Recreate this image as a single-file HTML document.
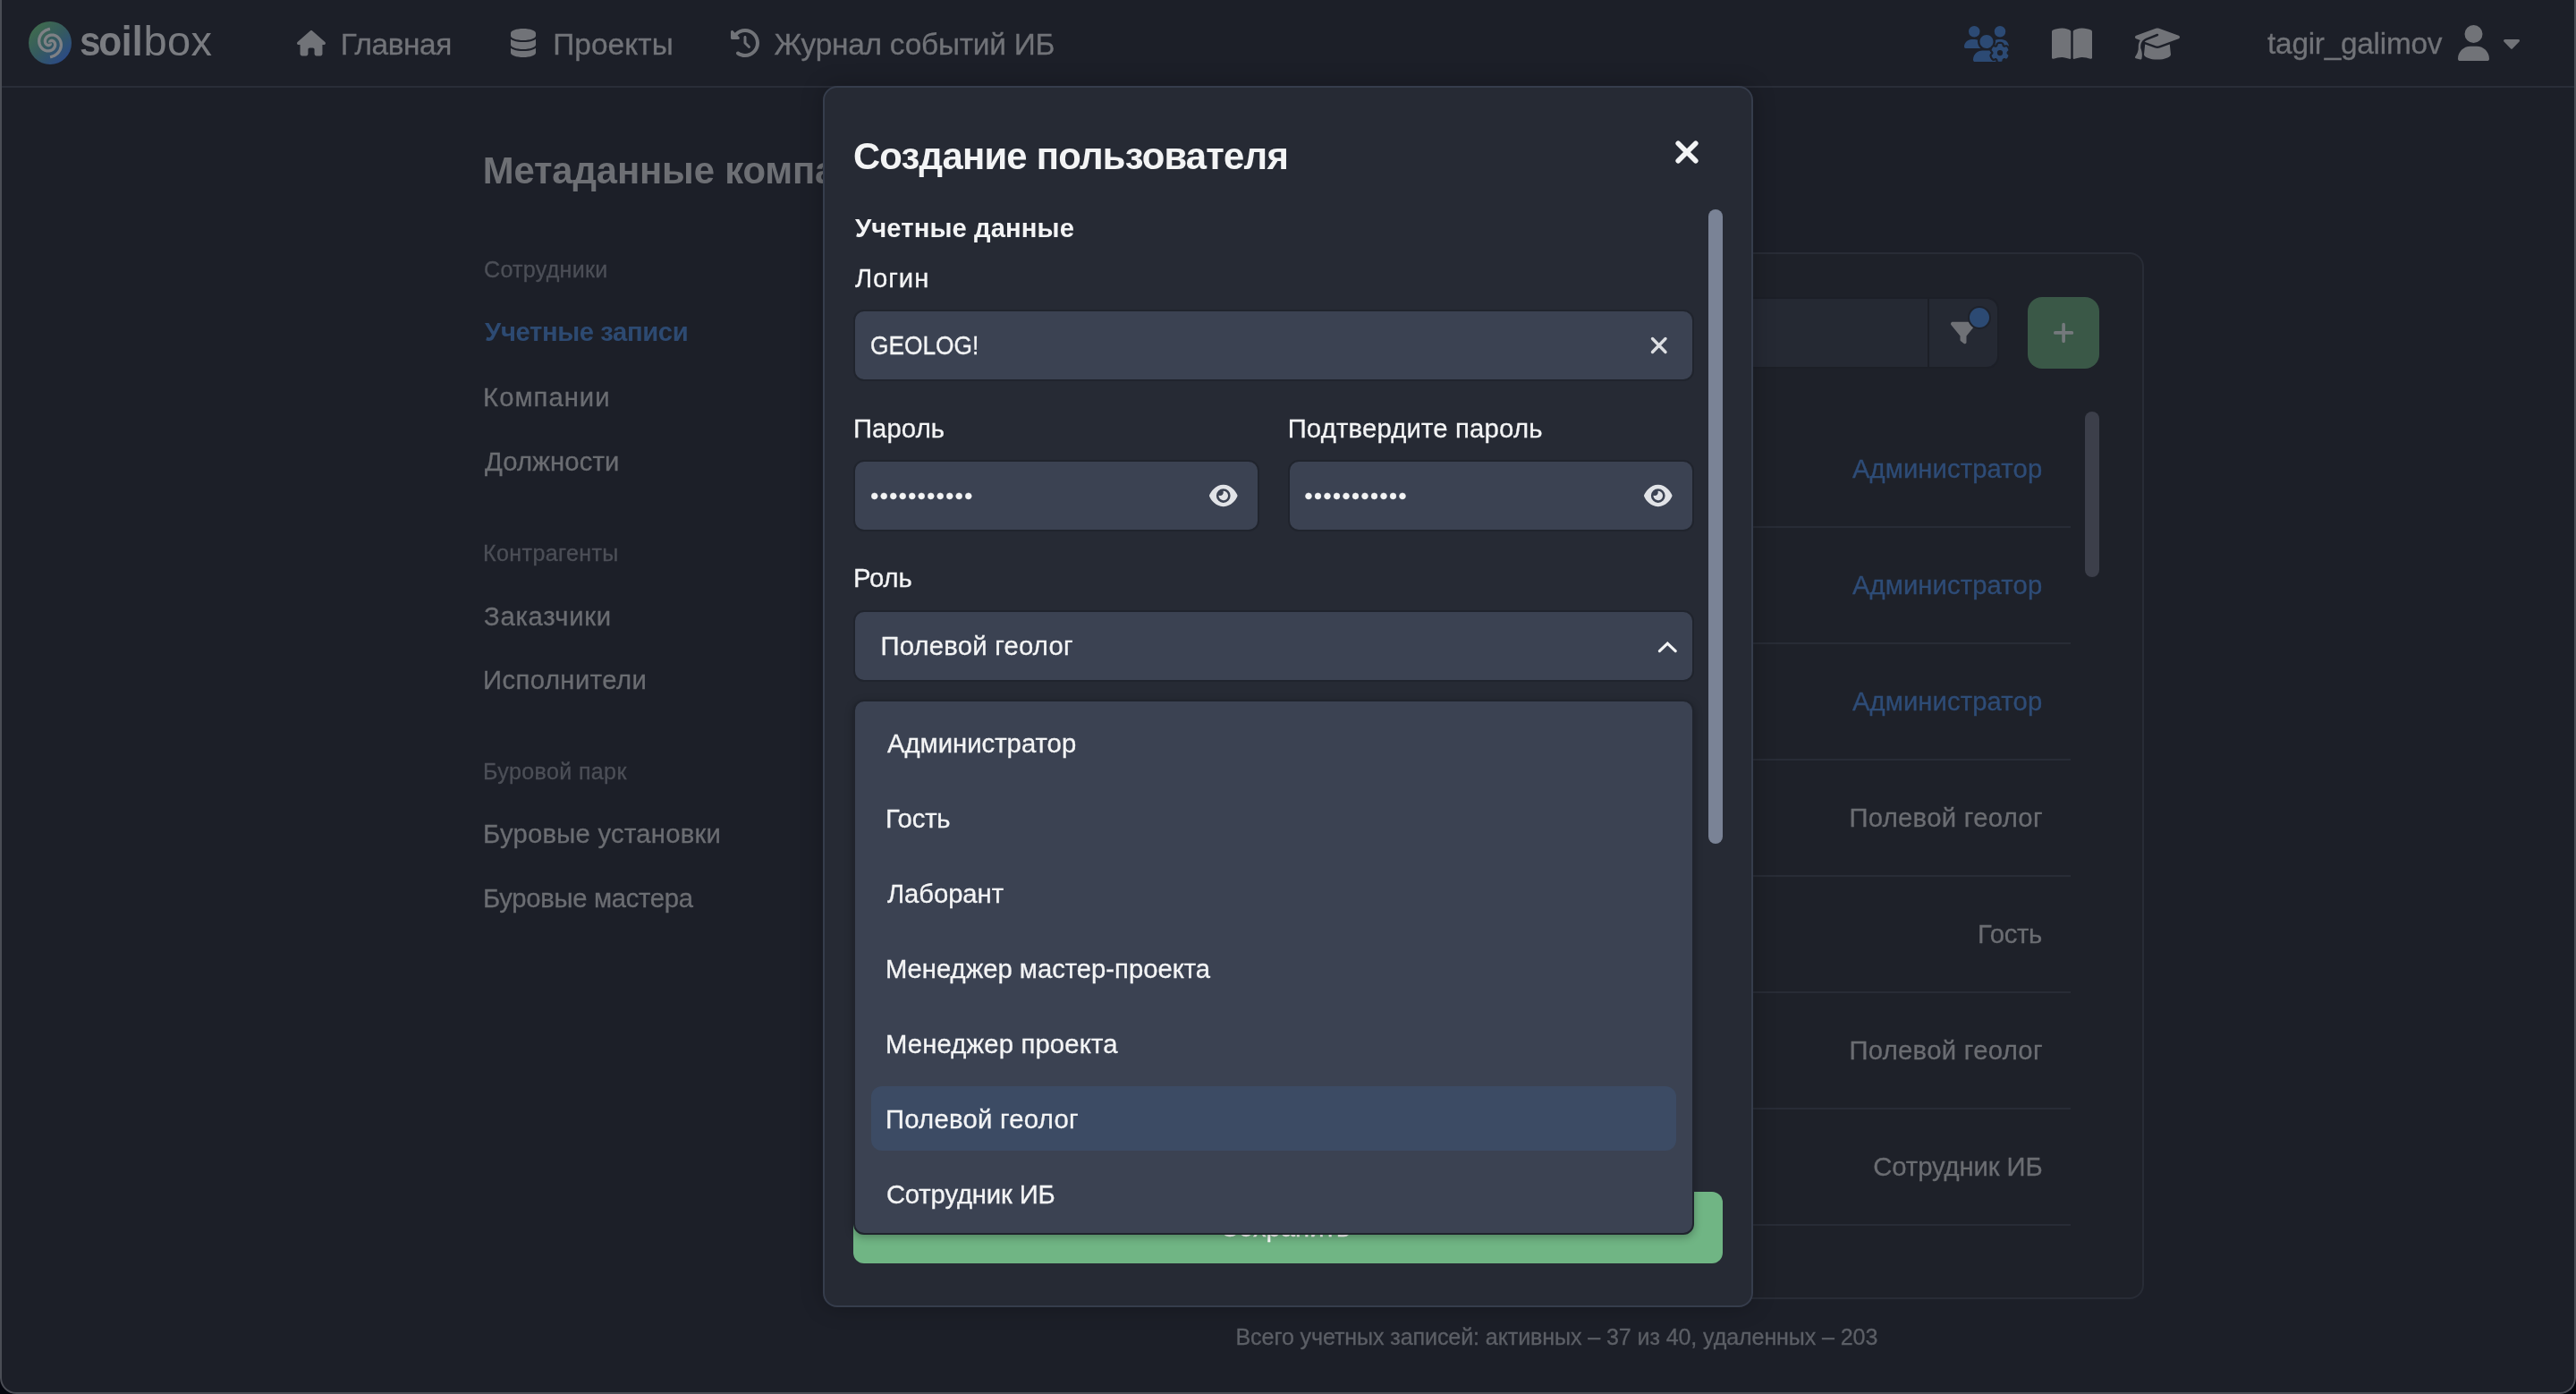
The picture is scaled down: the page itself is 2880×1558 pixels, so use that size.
<!DOCTYPE html>
<html lang="ru"><head><meta charset="utf-8"><title>soilbox</title><style>
*{box-sizing:border-box}
html,body{margin:0;padding:0}
html{overflow:hidden;background:#05070f}
body{width:2880px;height:1558px;overflow:hidden;background:#05070f;font-family:"Liberation Sans", sans-serif;position:relative}
.win{transform:translateZ(0);will-change:transform;position:absolute;left:0;top:0;width:2880px;height:1558px;background:#1c1f28;border-radius:0 0 18px 18px;overflow:hidden}
.frame{position:absolute;left:0;top:-4px;width:2880px;height:1562px;border-left:2px solid #4a4d55;border-right:2px solid #4a4d55;border-bottom:2px solid #4a4d55;border-radius:0 0 18px 18px;pointer-events:none}
.t{position:absolute;white-space:nowrap;line-height:1}
.i{position:absolute;display:block;overflow:visible}
.b{position:absolute}
</style></head><body>
<div class="win">
<nav aria-label="Главное меню">
<div class="b" style="left:0;top:96px;width:2880px;height:2px;background:#292d38"></div>
<svg class="i" style="left:32px;top:24px" width="48" height="48" viewBox="-24 -24 48 48" ><defs><linearGradient id="lg" x1="0.15" y1="0.1" x2="0.85" y2="0.9"><stop offset="0" stop-color="#3f6b4e"/><stop offset="0.5" stop-color="#355a60"/><stop offset="1" stop-color="#2b4a86"/></linearGradient></defs><circle cx="0" cy="0" r="24" fill="url(#lg)"/><path d="M0.00,-15.60 L-1.61,-15.29 L-3.15,-14.81 L-4.61,-14.18 L-5.97,-13.41 L-7.22,-12.51 L-8.36,-11.50 L-9.36,-10.40 L-10.23,-9.21 L-10.95,-7.95 L-11.52,-6.65 L-11.94,-5.32 L-12.21,-3.97 L-12.33,-2.62 L-12.31,-1.29 L-12.15,-0.00 L-11.85,1.25 L-11.43,2.43 L-10.90,3.54 L-10.26,4.57 L-9.53,5.50 L-8.71,6.33 L-7.83,7.05 L-6.90,7.66 L-5.92,8.15 L-4.93,8.53 L-3.91,8.79 L-2.90,8.93 L-1.90,8.96 L-0.93,8.88 L-0.00,8.70 L0.89,8.42 L1.71,8.06 L2.48,7.62 L3.16,7.11 L3.78,6.54 L4.30,5.92 L4.74,5.27 L5.10,4.59 L5.36,3.90 L5.54,3.20 L5.64,2.51 L5.65,1.84 L5.59,1.19 L5.45,0.57 L5.25,0.00 L4.99,-0.52 L4.69,-1.00 L4.34,-1.41 L3.96,-1.76 L3.55,-2.05 L3.13,-2.27 L2.71,-2.44 L2.28,-2.53 L1.87,-2.57 L1.47,-2.55 L1.11,-2.48 L0.77,-2.37 L0.47,-2.21 L0.21,-2.02 L0.00,-1.80 L-0.16,-1.56 L-0.28,-1.31 L-0.34,-1.06 L-0.36,-0.80 L-0.32,-0.56" fill="none" stroke="#7e8185" stroke-width="3.3"/><path d="M0.00,15.60 L1.61,15.29 L3.15,14.81 L4.61,14.18 L5.97,13.41 L7.23,12.51 L8.36,11.50 L9.36,10.40 L10.23,9.21 L10.95,7.95 L11.52,6.65 L11.94,5.32 L12.21,3.97 L12.33,2.62 L12.31,1.29 L12.15,0.00 L11.85,-1.25 L11.43,-2.43 L10.90,-3.54 L10.26,-4.57 L9.53,-5.50 L8.71,-6.33 L7.83,-7.05 L6.90,-7.66 L5.92,-8.15 L4.92,-8.53 L3.91,-8.79 L2.90,-8.93 L1.90,-8.96 L0.93,-8.88 L0.00,-8.70 L-0.89,-8.42 L-1.71,-8.06 L-2.48,-7.62 L-3.16,-7.11 L-3.77,-6.54 L-4.30,-5.92 L-4.74,-5.27 L-5.10,-4.59 L-5.36,-3.90 L-5.54,-3.20 L-5.64,-2.51 L-5.65,-1.84 L-5.59,-1.19 L-5.45,-0.57 L-5.25,-0.00 L-4.99,0.52 L-4.69,1.00 L-4.34,1.41 L-3.96,1.76 L-3.55,2.05 L-3.13,2.27 L-2.71,2.44 L-2.28,2.53 L-1.87,2.57 L-1.48,2.55 L-1.11,2.48 L-0.77,2.37 L-0.47,2.21 L-0.21,2.02 L-0.00,1.80 L0.16,1.56 L0.28,1.31 L0.34,1.06 L0.36,0.80 L0.32,0.56" fill="none" stroke="#7e8185" stroke-width="3.3"/></svg>
<div class="t" style="left:88.8px;top:22.01px;font-size:47px;color:#7a7c81;font-weight:700;transform:scaleX(0.9);transform-origin:0 0"><span style="letter-spacing:-2.6px">s</span><span style="letter-spacing:-0.2px">o</span><span style="letter-spacing:0.2px">i</span>l</div>
<div class="t" style="left:160.4px;top:22.01px;font-size:47px;color:#7a7c81;letter-spacing:0.4px">box</div>
<svg class="i" style="left:332px;top:34.2px" width="32" height="28.5" viewBox="0 0 576 512" ><path fill="#717378" d="M575.8 255.5c0 18-15 32.1-32 32.1h-32l.7 160.2c0 2.700-.2 5.400-.5 8.100V472c0 22.100-17.900 40-40 40H456c-1.100 0-2.200 0-3.300-.1c-1.400 .1-2.800 .1-4.200 .1H416 392c-22.100 0-40-17.900-40-40V448 384c0-17.700-14.300-32-32-32H256c-17.700 0-32 14.300-32 32v64 24c0 22.100-17.900 40-40 40H160 128.100c-1.500 0-3-.1-4.500-.2c-1.200 .1-2.400 .2-3.600 .2H104c-22.100 0-40-17.900-40-40V360c0-.9 0-1.900 .1-2.800V287.600H32c-18 0-32-14-32-32.100c0-9 3-17 10-24L266.400 8c7-7 15-8 22-8s15 2 21 7L564.800 231.500c8 7 12 15 11 24z"/></svg>
<div class="t" style="left:380.70px;top:33.19px;font-size:33.44px;color:#717378;-webkit-text-stroke:0.3px;letter-spacing:-0.431px;">Главная</div>
<svg class="i" style="left:571px;top:32px" width="28" height="32" viewBox="0 0 448 512" ><path fill="#717378" d="M448 80v48c0 44.200-100.300 80-224 80S0 172.200 0 128V80C0 35.800 100.300 0 224 0S448 35.800 448 80zM393.200 214.700c20.800-7.400 39.900-16.900 54.800-28.600V288c0 44.200-100.300 80-224 80S0 332.200 0 288V186.100c14.900 11.800 34 21.200 54.800 28.600C99.700 230.700 159.500 240 224 240s124.300-9.300 169.200-25.300zM0 346.100c14.900 11.800 34 21.200 54.800 28.600C99.700 390.700 159.500 400 224 400s124.300-9.300 169.200-25.300c20.800-7.400 39.900-16.900 54.800-28.600V432c0 44.200-100.300 80-224 80S0 476.200 0 432V346.100z"/></svg>
<div class="t" style="left:618.20px;top:33.19px;font-size:33.44px;color:#717378;-webkit-text-stroke:0.3px;letter-spacing:0.066px;">Проекты</div>
<svg class="i" style="left:817px;top:32px" width="32" height="32" viewBox="0 0 512 512" ><path fill="#717378" d="M75 75L41 41C25.900 25.900 0 36.600 0 57.900V168c0 13.300 10.700 24 24 24H134.100c21.400 0 32.100-25.900 17-41l-30.800-30.800C155 85.500 203 64 256 64c106 0 192 86 192 192s-86 192-192 192c-40.800 0-78.600-12.700-109.700-34.400c-14.500-10.100-34.400-6.600-44.600 7.900s-6.600 34.400 7.900 44.600C151.200 495 201.700 512 256 512c141.400 0 256-114.600 256-256S397.400 0 256 0C185.300 0 121.300 28.700 75 75zm181 53c-13.300 0-24 10.700-24 24V256c0 6.400 2.500 12.500 7 17l72 72c9.400 9.400 24.600 9.400 33.900 0s9.400-24.600 0-33.900l-65-65V152c0-13.300-10.700-24-24-24z"/></svg>
<div class="t" style="left:865.40px;top:33.19px;font-size:33.44px;color:#717378;-webkit-text-stroke:0.3px;letter-spacing:-0.251px;">Журнал событий ИБ</div>
<svg class="i" style="left:2196px;top:28.8px" width="50" height="40" viewBox="0 0 640 512" ><path fill="#2c4a74" d="M144 160A80 80 0 1 0 144 0a80 80 0 1 0 0 160zm368 0A80 80 0 1 0 512 0a80 80 0 1 0 0 160zM0 298.700C0 310.400 9.600 320 21.300 320H234.700c.2 0 .4 0 .7 0c-26.600-23.500-43.300-57.800-43.300-96c0-7.600 .7-15 1.900-22.300c-13.600-6.300-28.700-9.700-44.600-9.700H106.700C47.800 192 0 239.800 0 298.700zM320 320c24 0 45.900-8.800 62.700-23.300c2.500-3.700 5.200-7.300 8-10.700c2.700-3.300 5.700-6.100 9-8.300C410 262.300 416 243.900 416 224c0-53-43-96-96-96s-96 43-96 96s43 96 96 96zm65.400 60.200c-10.300-5.900-18.100-16.200-20.800-28.200H261.300C187.700 352 128 411.700 128 485.300c0 14.700 11.900 26.700 26.700 26.700H455.200c-2.100-5.200-3.200-10.900-3.200-16.400v-3c-1.300-.7-2.700-1.500-4-2.300l-2.600 1.500c-16.800 9.700-40.500 8-54.700-9.700c-4.500-5.600-8.600-11.500-12.400-17.600l-.1-.2-.1-.2-2.400-4.100-.1-.2-.1-.2c-3.400-6.200-6.400-12.600-9-19.300c-8.200-21.200 2.200-42.600 19-52.300l2.700-1.500c0-.8 0-1.500 0-2.300s0-1.500 0-2.300l-2.700-1.500zM533.300 192H490.700c-15.900 0-31 3.500-44.600 9.700c1.300 7.200 1.900 14.700 1.900 22.300c0 17.400-3.500 33.900-9.700 49c2.500 .9 4.900 2 7.100 3.300l2.600 1.500c1.300-.8 2.600-1.600 4-2.300v-3c0-19.400 13.300-39.100 35.800-42.600c7.900-1.200 16-1.900 24.200-1.900s16.300 .6 24.200 1.900c22.500 3.500 35.800 23.200 35.800 42.600v3c1.300 .7 2.700 1.500 4 2.300l2.600-1.500c16.800-9.700 40.500-8 54.700 9.700c2.300 2.800 4.500 5.800 6.600 8.700c-2.100-57.100-49-102.700-106.600-102.700zm91.300 163.900c6.300-3.600 9.500-11.100 6.800-18c-2.100-5.500-4.600-10.800-7.400-15.900l-2.300-4c-3.100-5.100-6.500-9.900-10.200-14.500c-4.600-5.700-12.700-6.700-19-3l-2.900 1.700c-9.200 5.300-20.400 4-29.600-1.300s-16.100-14.500-16.100-25.100v-3.400c0-7.300-4.900-13.800-12.100-14.900c-6.500-1-13.100-1.500-19.900-1.500s-13.400 .5-19.900 1.500c-7.200 1.100-12.100 7.600-12.100 14.900v3.400c0 10.600-6.900 19.800-16.100 25.100s-20.400 6.600-29.600 1.300l-2.900-1.700c-6.300-3.600-14.400-2.600-19 3c-3.700 4.600-7.100 9.500-10.200 14.600l-2.300 3.900c-2.800 5.100-5.300 10.400-7.400 15.900c-2.600 6.800 .5 14.300 6.800 17.900l2.900 1.700c9.200 5.300 13.700 15.800 13.700 26.400s-4.500 21.100-13.700 26.400l-3 1.700c-6.300 3.600-9.500 11.100-6.800 17.900c2.100 5.500 4.600 10.700 7.400 15.800l2.400 4.100c3 5.100 6.400 9.900 10.100 14.500c4.600 5.700 12.700 6.700 19 3l2.900-1.700c9.200-5.300 20.400-4 29.600 1.300s16.100 14.500 16.100 25.100v3.400c0 7.300 4.900 13.800 12.100 14.900c6.500 1 13.100 1.500 19.900 1.500s13.400-.5 19.900-1.500c7.200-1.100 12.100-7.600 12.100-14.900v-3.400c0-10.600 6.900-19.800 16.100-25.100s20.400-6.600 29.600-1.300l2.900 1.700c6.300 3.600 14.400 2.600 19-3c3.700-4.600 7.100-9.400 10.100-14.500l2.400-4.200c2.800-5.100 5.300-10.300 7.400-15.800c2.600-6.800-.5-14.300-6.800-17.900l-3-1.700c-9.200-5.300-13.700-15.800-13.700-26.400s4.500-21.100 13.700-26.400l3-1.700zM472 384a40 40 0 1 1 80 0 40 40 0 1 1 -80 0z"/></svg>
<svg class="i" style="left:2294px;top:28.7px" width="45" height="40" viewBox="0 0 576 512" ><path fill="#717378" d="M249.6 471.5c10.8 3.8 22.4-4.1 22.400-15.500V78.600c0-4.200-1.600-8.400-5-11C247.400 52 202.400 32 144 32C93.500 32 46.300 45.300 18.100 56.100C6.800 60.500 0 71.700 0 83.800V454.100c0 11.900 12.800 20.200 24.100 16.500C55.600 460.100 105.500 448 144 448c33.900 0 79 14 105.600 23.500zm76.800 0C353 462 398.100 448 432 448c38.500 0 88.400 12.100 119.900 22.600c11.300 3.800 24.100-4.600 24.100-16.500V83.800c0-12.100-6.800-23.300-18.100-27.600C529.700 45.300 482.500 32 432 32c-58.400 0-103.400 20-123 35.600c-3.300 2.600-5 6.800-5 11V456c0 11.400 11.700 19.300 22.400 15.500z"/></svg>
<svg class="i" style="left:2387px;top:28.7px" width="50" height="40" viewBox="0 0 640 512" ><path fill="#717378" d="M320 32c-8.100 0-16.100 1.400-23.700 4.100L15.800 137.400C6.300 140.900 0 149.900 0 160s6.300 19.100 15.800 22.600l57.900 20.900C57.300 229.300 48 259.800 48 291.900v28.100c0 28.400-10.800 57.700-22.300 80.800c-6.500 13-13.900 25.800-22.500 37.600C0 442.700-.9 448.300 .9 453.400s6 8.900 11.200 10.200l64 16c4.200 1.100 8.700 .3 12.400-2s6.300-6.100 7.100-10.400c8.600-42.800 4.300-81.200-2.100-108.700C90.300 344.300 86 329.800 80 316.500V291.900c0-30.200 10.200-58.700 27.900-81.500c12.900-15.500 29.600-28 49.200-35.700l157-61.700c8.200-3.200 17.500 .8 20.700 9s-.8 17.500-9 20.700l-157 61.700c-12.400 4.900-23.300 12.400-32.200 21.600l159.600 57.600c7.600 2.700 15.600 4.100 23.700 4.100s16.100-1.400 23.700-4.100L624.200 182.600c9.500-3.400 15.800-12.500 15.800-22.600s-6.300-19.100-15.800-22.600L343.700 36.100C336.100 33.400 328.100 32 320 32zM128 408c0 35.300 86 72 192 72s192-36.700 192-72L496.700 262.600 354.500 314c-11.100 4-22.800 6-34.500 6s-23.500-2-34.500-6L143.300 262.600 128 408z"/></svg>
<div class="t" style="left:2535.10px;top:31.79px;font-size:33.44px;color:#717378;-webkit-text-stroke:0.3px;letter-spacing:-0.284px;">tagir_galimov</div>
<svg class="i" style="left:2748px;top:28px" width="35" height="40" viewBox="0 0 448 512" ><path fill="#717378" d="M224 256A128 128 0 1 0 224 0a128 128 0 1 0 0 256zm-45.700 48C79.800 304 0 383.800 0 482.300C0 498.700 13.300 512 29.700 512H418.300c16.400 0 29.700-13.300 29.700-29.700C448 383.800 368.200 304 269.700 304H178.300z"/></svg>
<svg class="i" style="left:2798.9px;top:44.3px" width="18" height="10.7" viewBox="0 0 18 10.7" ><path fill="#717378" stroke="#717378" stroke-width="3" stroke-linejoin="round" d="M1.5,1.5 H16.5 L9,9.2 Z"/></svg>
</nav>
<aside>
<div class="t" style="left:539.80px;top:170.02px;font-size:41.8px;color:#6d6f74;font-weight:700;letter-spacing:-0.150px;">Метаданные компании</div>
<div class="t" style="left:541.10px;top:288.97px;font-size:25.08px;color:#4c4f57;-webkit-text-stroke:0.3px;letter-spacing:0.255px;">Сотрудники</div>
<div class="t" style="left:542.10px;top:357.43px;font-size:29.26px;color:#2d4a72;font-weight:700;letter-spacing:-0.400px;">Учетные записи</div>
<div class="t" style="left:540.10px;top:430.03px;font-size:29.26px;color:#6b6d72;-webkit-text-stroke:0.3px;letter-spacing:1.014px;">Компании</div>
<div class="t" style="left:542.10px;top:502.33px;font-size:29.26px;color:#6b6d72;-webkit-text-stroke:0.3px;letter-spacing:0.120px;">Должности</div>
<div class="t" style="left:540.10px;top:605.77px;font-size:25.08px;color:#4c4f57;-webkit-text-stroke:0.3px;letter-spacing:0.350px;">Контрагенты</div>
<div class="t" style="left:541.10px;top:674.73px;font-size:29.26px;color:#6b6d72;-webkit-text-stroke:0.3px;letter-spacing:0.700px;">Заказчики</div>
<div class="t" style="left:540.10px;top:746.43px;font-size:29.26px;color:#6b6d72;-webkit-text-stroke:0.3px;letter-spacing:0.420px;">Исполнители</div>
<div class="t" style="left:540.10px;top:850.07px;font-size:25.08px;color:#4c4f57;-webkit-text-stroke:0.3px;letter-spacing:0.348px;">Буровой парк</div>
<div class="t" style="left:540.10px;top:918.33px;font-size:29.26px;color:#6b6d72;-webkit-text-stroke:0.3px;letter-spacing:0.257px;">Буровые установки</div>
<div class="t" style="left:540.10px;top:990.43px;font-size:29.26px;color:#6b6d72;-webkit-text-stroke:0.3px;letter-spacing:-0.314px;">Буровые мастера</div>
</aside>
<main>
<div class="b" style="left:1000px;top:282px;width:1397px;height:1170px;border:2px solid #282c36;border-radius:16px;background:#1e2129"></div>
<div class="b" style="left:1100px;top:332px;width:1135px;height:80px;border:2px solid #1c1f27;border-radius:14px;background:#252933"></div>
<div class="b" style="left:2155px;top:334px;width:2px;height:76px;background:#1c1f27"></div>
<svg class="i" style="left:2181.2px;top:357.8px" width="28" height="28" viewBox="0 0 512 512" ><path fill="#6f7176" d="M3.900 54.900C10.500 40.900 24.500 32 40 32H472c15.500 0 29.500 8.900 36.100 22.900s4.600 30.500-5.200 42.500L320 320.900V448c0 12.100-6.800 23.200-17.700 28.600s-23.800 4.300-33.500-3l-64-48c-8.100-6-12.800-15.500-12.800-25.600V320.900L9 97.300C-.7 85.400-2.800 68.800 3.900 54.900z"/></svg>
<div class="b" style="left:2200px;top:342px;width:26px;height:26px;border-radius:50%;background:#2c4a73;border:2px solid #1e222b"></div>
<div class="b" style="left:2267px;top:332px;width:80px;height:80px;border-radius:16px;background:#3a5847"></div>
<svg class="i" style="left:2296px;top:361px" width="22" height="22" viewBox="0 0 22 22" ><path d="M11.1,1.7V20.3M1.8,10.9H20.4" stroke="#74797c" stroke-width="3.7" stroke-linecap="round" fill="none"/></svg>
<div class="t" style="left:2070.90px;top:510.43px;font-size:29.26px;color:#2e4c77;-webkit-text-stroke:0.3px;letter-spacing:0.103px;">Администратор</div>
<div class="b" style="left:1100px;top:588px;width:1215px;height:2px;background:#282c36"></div>
<div class="t" style="left:2070.90px;top:640.43px;font-size:29.26px;color:#2e4c77;-webkit-text-stroke:0.3px;letter-spacing:0.103px;">Администратор</div>
<div class="b" style="left:1100px;top:718px;width:1215px;height:2px;background:#282c36"></div>
<div class="t" style="left:2070.90px;top:770.43px;font-size:29.26px;color:#2e4c77;-webkit-text-stroke:0.3px;letter-spacing:0.103px;">Администратор</div>
<div class="b" style="left:1100px;top:848px;width:1215px;height:2px;background:#282c36"></div>
<div class="t" style="left:2067.40px;top:900.43px;font-size:29.26px;color:#6b6d72;-webkit-text-stroke:0.3px;letter-spacing:0.312px;">Полевой геолог</div>
<div class="b" style="left:1100px;top:978px;width:1215px;height:2px;background:#282c36"></div>
<div class="t" style="left:2211.10px;top:1030.43px;font-size:29.26px;color:#6b6d72;-webkit-text-stroke:0.3px;letter-spacing:-0.300px;">Гость</div>
<div class="b" style="left:1100px;top:1108px;width:1215px;height:2px;background:#282c36"></div>
<div class="t" style="left:2067.40px;top:1160.43px;font-size:29.26px;color:#6b6d72;-webkit-text-stroke:0.3px;letter-spacing:0.312px;">Полевой геолог</div>
<div class="b" style="left:1100px;top:1238px;width:1215px;height:2px;background:#282c36"></div>
<div class="t" style="left:2094.30px;top:1290.43px;font-size:29.26px;color:#6b6d72;-webkit-text-stroke:0.3px;letter-spacing:-0.096px;">Сотрудник ИБ</div>
<div class="b" style="left:1100px;top:1368px;width:1215px;height:2px;background:#282c36"></div>
<div class="b" style="left:2331px;top:460px;width:16px;height:185px;border-radius:8px;background:#3c3f4a"></div>
<div class="t" style="left:1381.50px;top:1481.97px;font-size:25.08px;color:#5c5f66;-webkit-text-stroke:0.3px;letter-spacing:-0.107px;">Всего учетных записей: активных – 37 из 40, удаленных – 203</div>
</main>
<section role="dialog" aria-modal="true" aria-label="Создание пользователя">
<div class="b" style="left:920px;top:96px;width:1040px;height:1365px;border:2px solid #363d4c;border-radius:16px;background:#262a34;box-shadow:0 0 24px rgba(0,0,0,.25)"></div>
<div class="t" style="left:953.90px;top:154.47px;font-size:41.8px;color:#f3f4f5;font-weight:700;letter-spacing:-0.746px;">Создание пользователя</div>
<svg class="i" style="left:1873.25px;top:157px" width="26" height="26" viewBox="0 0 26 26" ><path d="M3.2,3.2L22.8,22.8M22.8,3.2L3.2,22.8" stroke="#f3f4f5" stroke-width="5.6" stroke-linecap="round" fill="none"/></svg>
<div class="t" style="left:955.90px;top:240.83px;font-size:29.26px;color:#f3f4f5;font-weight:700;letter-spacing:0.091px;">Учетные данные</div>
<div class="t" style="left:955.90px;top:297.08px;font-size:29.26px;color:#f3f4f5;-webkit-text-stroke:0.3px;letter-spacing:0.950px;">Логин</div>
<div class="b" style="left:954px;top:346px;width:940px;height:80px;background:#3b4252;border:2px solid #20242d;border-radius:12px;"></div>
<div class="t" style="left:972.90px;top:371.83px;font-size:29.26px;color:#f3f4f5;-webkit-text-stroke:0.3px;letter-spacing:-0.033px;transform:scaleX(0.9);transform-origin:0 0;">GEOLOG!</div>
<svg class="i" style="left:1845.75px;top:377px" width="17.5" height="18" viewBox="0 0 17.5 18" ><path d="M1.5,1.5L16,16.5M16,1.5L1.5,16.5" stroke="#dcdee2" stroke-width="3.4" stroke-linecap="round" fill="none"/></svg>
<div class="t" style="left:953.90px;top:464.58px;font-size:29.26px;color:#f3f4f5;-webkit-text-stroke:0.3px;letter-spacing:0.140px;">Пароль</div>
<div class="t" style="left:1439.65px;top:464.58px;font-size:29.26px;color:#f3f4f5;-webkit-text-stroke:0.3px;letter-spacing:0.199px;">Подтвердите пароль</div>
<div class="b" style="left:954px;top:514px;width:454px;height:80px;background:#3b4252;border:2px solid #20242d;border-radius:12px;"></div>
<div class="b" style="left:1440px;top:514px;width:454px;height:80px;background:#3b4252;border:2px solid #20242d;border-radius:12px;"></div>
<div class="t" style="left:973.20px;top:541.73px;font-size:25.6px;color:#f3f4f5;-webkit-text-stroke:0.3px;letter-spacing:1.540px;">•••••••••••</div>
<div class="t" style="left:1458.60px;top:541.73px;font-size:25.6px;color:#f3f4f5;-webkit-text-stroke:0.3px;letter-spacing:1.540px;">•••••••••••</div>
<svg class="i" style="left:1352px;top:540px" width="31.5" height="28" viewBox="0 0 576 512" ><path fill="#e1e3e7" d="M288 32c-80.800 0-145.500 36.800-192.600 80.600C48.600 156 17.300 208 2.500 243.700c-3.300 7.900-3.300 16.700 0 24.600C17.300 304 48.600 356 95.400 399.400C142.500 443.200 207.200 480 288 480s145.500-36.800 192.600-80.600c46.800-43.500 78.100-95.400 93-131.100c3.300-7.900 3.300-16.700 0-24.600c-14.900-35.700-46.200-87.700-93-131.100C433.500 68.800 368.800 32 288 32zM144 256a144 144 0 1 1 288 0 144 144 0 1 1 -288 0zm144-64c0 35.300-28.700 64-64 64c-7.100 0-13.900-1.200-20.300-3.300c-5.500-1.800-11.900 1.600-11.700 7.400c.3 6.900 1.300 13.800 3.200 20.700c13.700 51.200 66.400 81.600 117.600 67.900s81.600-66.400 67.900-117.600c-11.100-41.500-47.800-69.400-88.600-71.100c-5.800-.2-9.200 6.100-7.400 11.700c2.100 6.400 3.300 13.200 3.300 20.300z"/></svg>
<svg class="i" style="left:1838px;top:540px" width="31.5" height="28" viewBox="0 0 576 512" ><path fill="#e1e3e7" d="M288 32c-80.800 0-145.500 36.800-192.600 80.600C48.600 156 17.300 208 2.500 243.700c-3.300 7.900-3.300 16.700 0 24.600C17.300 304 48.600 356 95.400 399.400C142.500 443.200 207.200 480 288 480s145.500-36.800 192.600-80.600c46.800-43.500 78.100-95.400 93-131.100c3.300-7.900 3.300-16.700 0-24.600c-14.900-35.700-46.200-87.700-93-131.100C433.500 68.800 368.800 32 288 32zM144 256a144 144 0 1 1 288 0 144 144 0 1 1 -288 0zm144-64c0 35.300-28.700 64-64 64c-7.100 0-13.900-1.200-20.300-3.300c-5.500-1.800-11.900 1.600-11.700 7.400c.3 6.900 1.300 13.800 3.200 20.700c13.700 51.200 66.400 81.600 117.600 67.900s81.600-66.400 67.900-117.600c-11.100-41.500-47.800-69.400-88.600-71.100c-5.800-.2-9.200 6.100-7.400 11.700c2.100 6.400 3.300 13.200 3.300 20.300z"/></svg>
<div class="t" style="left:953.90px;top:632.08px;font-size:29.26px;color:#f3f4f5;-webkit-text-stroke:0.3px;letter-spacing:-0.079px;">Роль</div>
<div class="b" style="left:954px;top:682px;width:940px;height:80px;background:#3b4252;border:2px solid #20242d;border-radius:12px;"></div>
<div class="t" style="left:984.40px;top:707.83px;font-size:29.26px;color:#f3f4f5;-webkit-text-stroke:0.3px;letter-spacing:0.235px;">Полевой геолог</div>
<svg class="i" style="left:1852px;top:715px" width="24.5" height="16.5" viewBox="0 0 24.5 16.5" ><path d="M3.4,12.6L12.3,4.2L21.2,12.6" stroke="#f3f4f5" stroke-width="3.2" stroke-linecap="round" stroke-linejoin="miter" fill="none"/></svg>
<div class="b" style="left:1910px;top:234px;width:16px;height:709px;border-radius:8px;background:#7a8396"></div>
<div class="b" style="left:954px;top:1332px;width:972px;height:80px;border-radius:12px;background:#70b584"></div>
<div class="t" style="left:1363.90px;top:1357.83px;font-size:29.26px;color:#ffffff;-webkit-text-stroke:0.3px;">Сохранить</div>
<div role="listbox">
<div class="b" style="left:954px;top:782px;width:940px;height:598px;background:#3b4252;border:2px solid #20242d;border-radius:12px;box-shadow:0 3px 10px rgba(0,0,0,.28);"></div>
<div class="b" style="left:974px;top:1214px;width:900px;height:72px;border-radius:12px;background:#3c4b64"></div>
<div class="t" style="left:991.90px;top:816.73px;font-size:29.26px;color:#f3f4f5;-webkit-text-stroke:0.3px;letter-spacing:0.020px;">Администратор</div>
<div class="t" style="left:989.90px;top:900.83px;font-size:29.26px;color:#f3f4f5;-webkit-text-stroke:0.3px;letter-spacing:-0.172px;">Гость</div>
<div class="t" style="left:991.90px;top:984.93px;font-size:29.26px;color:#f3f4f5;-webkit-text-stroke:0.3px;letter-spacing:-0.058px;">Лаборант</div>
<div class="t" style="left:989.90px;top:1069.03px;font-size:29.26px;color:#f3f4f5;-webkit-text-stroke:0.3px;letter-spacing:-0.013px;">Менеджер мастер-проекта</div>
<div class="t" style="left:989.90px;top:1153.13px;font-size:29.26px;color:#f3f4f5;-webkit-text-stroke:0.3px;letter-spacing:0.163px;">Менеджер проекта</div>
<div class="t" style="left:989.90px;top:1237.23px;font-size:29.26px;color:#f3f4f5;-webkit-text-stroke:0.3px;letter-spacing:0.271px;">Полевой геолог</div>
<div class="t" style="left:990.90px;top:1321.33px;font-size:29.26px;color:#f3f4f5;-webkit-text-stroke:0.3px;letter-spacing:-0.144px;">Сотрудник ИБ</div>
</div>
</section>
<div class="frame"></div>
</div>
<script>(function(){var w=window.innerWidth||2880;if(w&&Math.abs(w-2880)>1){document.body.style.zoom=(w/2880);}})();</script>
</body></html>
